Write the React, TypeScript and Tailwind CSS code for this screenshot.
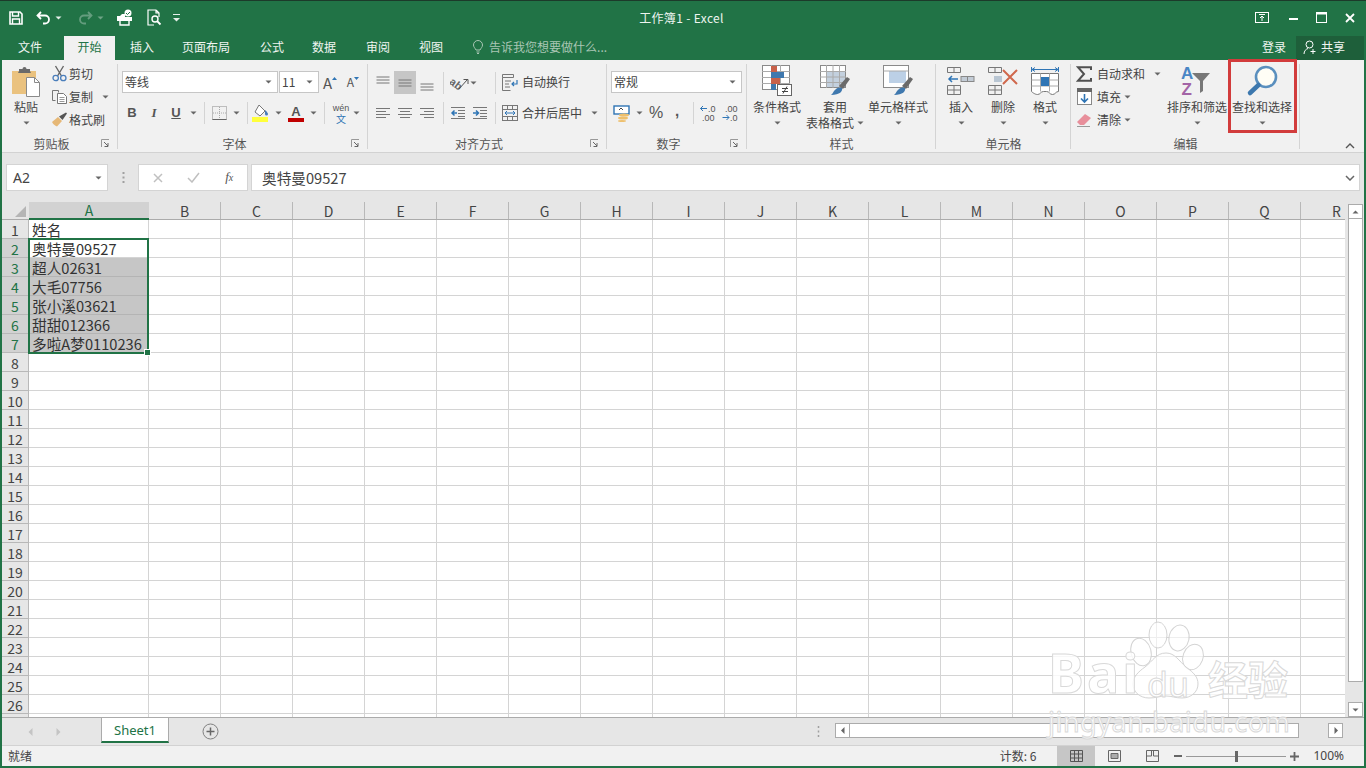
import React from "react";

const Caret = ({ c = "#666" }: { c?: string }) => (
  <svg width="7" height="4" viewBox="0 0 7 4" className="shrink-0"><path d="M0.5 0.5h6L3.5 3.5z" fill={c} /></svg>
);
const Sep = () => <span className="w-px h-[22px] bg-[#d4d4d4] shrink-0" />;
const Launcher = () => (
  <svg width="9" height="9" viewBox="0 0 9 9" className="shrink-0"><path d="M0.5 8V0.5H8" fill="none" stroke="#999" /><path d="M3 3l4 4M7 4v3.5H3.5" fill="none" stroke="#666" /></svg>
);

const Group = ({ w, label, launcher, children }: { w: string; label: string; launcher?: boolean; children: React.ReactNode }) => (
  <div className={`${w} shrink-0 flex flex-col relative`}>
    <div className="h-[75px] pt-[3px]">{children}</div>
    <div className="flex-1 flex items-start">
      <div className="flex-1 text-center text-[12px] leading-[17px] text-[#555]">{label}</div>
      {launcher && <div className="w-[16px] h-[17px] flex items-center mr-[1px]"><Launcher /></div>}
    </div>
    <span className="absolute right-0 top-[4px] bottom-[3px] w-px bg-[#d4d4d4]" />
  </div>
);

const Large = ({ w, icon, l1, l2, caretInline }: { w: string; icon: React.ReactNode; l1: string; l2?: string; caretInline?: boolean }) => (
  <div className={`${w} shrink-0 flex flex-col items-center text-[12px] leading-[16px] text-[#444]`}>
    <div className="h-[36px] flex items-center justify-center">{icon}</div>
    <div className="whitespace-nowrap">{l1}</div>
    {l2 ? (
      <div className="whitespace-nowrap flex items-center gap-[3px]">{l2}{caretInline && <Caret />}</div>
    ) : (
      <div className="h-[16px] flex items-center"><Caret /></div>
    )}
  </div>
);

const Small = ({ icon, text, iconW, tail }: { icon: React.ReactNode; text: string; iconW: string; tail?: React.ReactNode }) => (
  <div className="h-[23px] flex items-center text-[12px] leading-[16px] text-[#444] whitespace-nowrap">
    <span className={`${iconW} flex justify-center items-center shrink-0`}>{icon}</span>
    {text}
    {tail}
  </div>
);

const Box = ({ w, children, cls = "h-[22px]" }: { w: string; children?: React.ReactNode; cls?: string }) => (
  <span className={`${w} flex items-center justify-center shrink-0 ${cls}`}>{children}</span>
);

const Combo = ({ w, text }: { w: string; text: string }) => (
  <div className={`${w} h-[22px] bg-white border border-[#c6c6c6] flex items-center justify-between pl-[2px] pr-[5px] text-[12px] leading-[16px] text-[#444] shrink-0`}>
    <span>{text}</span><Caret />
  </div>
);

const AlignV = ({ y }: { y: number }) => (
  <svg width="16" height="22" viewBox="0 0 16 22"><path d={`M1.5 ${y}h13M1.5 ${y + 3}h13M1.5 ${y + 6}h13`} stroke="#777" fill="none" /></svg>
);
const AlignH = ({ k }: { k: number }) => {
  const s = k === 0 ? ["M1 .5h14", "M1 3.5h10", "M1 6.5h14", "M1 9.5h10"] : k === 1 ? ["M1 .5h14", "M3 3.5h10", "M1 6.5h14", "M3 9.5h10"] : ["M1 .5h14", "M5 3.5h10", "M1 6.5h14", "M5 9.5h10"];
  return <svg width="16" height="11" viewBox="0 0 16 11"><path d={s.join("")} stroke="#777" fill="none" /></svg>;
};
const Indent = ({ flip }: { flip?: boolean }) => (
  <svg width="16" height="12" viewBox="0 0 16 12">
    <path d="M1 .5h14M8 3.5h7M8 6.5h7M8 9.5h7M1 11.5h14" stroke="#777" fill="none" />
    <path d={flip ? "M1 6h5M4 3.5L6.5 6 4 8.5" : "M7 6H2M4.5 3.5L2 6l2.5 2.5"} stroke="#2f75b5" strokeWidth="1.5" fill="none" />
  </svg>
);

const PasteIcon = () => (
  <svg width="30" height="32" viewBox="0 0 30 32">
    <rect x="1" y="6" width="24" height="23" fill="#eac27f" />
    <path d="M8 6V4h3.5a2 2 0 014 0H19v2l1 2H7z" fill="#6a6a6a" />
    <path d="M15.5 12.5h8l5 5v14h-13z" fill="#fff" stroke="#8a8a8a" />
    <path d="M23.5 12.5v5h5" fill="none" stroke="#8a8a8a" />
  </svg>
);
const CutIcon = () => (
  <svg width="15" height="17" viewBox="0 0 15 17">
    <path d="M3.5 1l6 10M11.5 1l-6 10" stroke="#666" strokeWidth="1.4" fill="none" />
    <circle cx="3.7" cy="13" r="2.7" stroke="#4a7ebb" strokeWidth="1.3" fill="none" />
    <circle cx="11.3" cy="13" r="2.7" stroke="#4a7ebb" strokeWidth="1.3" fill="none" />
  </svg>
);
const CopyIcon = () => (
  <svg width="15" height="14" viewBox="0 0 15 14">
    <path d="M.5.5h6v2M.5.5v10h3" stroke="#777" fill="none" />
    <path d="M5.5 3.5h6l3 3v7h-9z" fill="#fff" stroke="#777" />
    <path d="M7.5 7.5h5M7.5 9.5h5M7.5 11.5h5" stroke="#999" />
  </svg>
);
const PainterIcon = () => (
  <svg width="17" height="15" viewBox="0 0 17 15">
    <path d="M1 10l6-5 4 4-5 5.5C4 14 2 12 1 10z" fill="#e6b877" />
    <path d="M8 4.5l3.5 3.5L16 1.5 15 .5z" fill="#555" />
  </svg>
);
const BorderIcon = () => (
  <svg width="15" height="14" viewBox="0 0 15 14">
    <rect x=".5" y=".5" width="14" height="13" fill="none" stroke="#888" strokeDasharray="1 1" />
    <path d="M7.5 1v12M1 7h13" stroke="#aaa" strokeDasharray="1 1" />
    <path d="M.5 13.5h14" stroke="#666" />
  </svg>
);
const FillIcon = () => (
  <svg width="18" height="18" viewBox="0 0 18 18">
    <path d="M7 1l6 6-5 5-5-4z" fill="#fff" stroke="#777" />
    <path d="M13 6c2 2 3 3 3 4a1.5 1.5 0 01-3 0z" fill="#4a7ebb" />
    <rect x="0" y="13" width="16" height="5" fill="#ffff3c" />
  </svg>
);
const WrapIcon = () => (
  <svg width="16" height="17" viewBox="0 0 16 17">
    <path d="M.5.5h11v3H.5zM.5 3.5v13h8M3 7h6M3 10h4M3 13h5" fill="none" stroke="#777" />
    <path d="M15 6v4h-5M12 8l-2 2 2 2" fill="none" stroke="#2f75b5" strokeWidth="1.2" />
  </svg>
);
const MergeIcon = () => (
  <svg width="16" height="16" viewBox="0 0 16 16">
    <rect x=".5" y=".5" width="15" height="15" fill="none" stroke="#777" />
    <path d="M.5 4.5h15M.5 11.5h15M5.5 .5v4M10.5 .5v4M5.5 11.5v4M10.5 11.5v4" stroke="#777" />
    <path d="M3 8h10M5 6L3 8l2 2M11 6l2 2-2 2" fill="none" stroke="#2f75b5" />
  </svg>
);
const OrientIcon = () => (
  <svg width="20" height="18" viewBox="0 0 20 18">
    <text x="0" y="13" fontSize="11" fontWeight="700" fill="#666" transform="rotate(38 5 9)" fontFamily="'Liberation Sans',sans-serif">ab</text>
    <path d="M9 15l8-9M13.5 5.5H18V10" fill="none" stroke="#555" />
  </svg>
);
const CurrencyIcon = () => (
  <svg width="18" height="17" viewBox="0 0 18 17">
    <rect x="1" y="1" width="15" height="8" fill="#fff" stroke="#2f75b5" strokeWidth="1.4" />
    <path d="M6 5l2-2 2 2" stroke="#444" fill="none" />
    <ellipse cx="11" cy="10" rx="5" ry="1.5" fill="#eec06e" /><ellipse cx="10" cy="13" rx="5" ry="1.5" fill="#eec06e" /><ellipse cx="9" cy="16" rx="4" ry="1" fill="#eec06e" />
  </svg>
);
const Decimals = ({ more }: { more?: boolean }) => (
  <svg width="20" height="18" viewBox="0 0 20 18" fontFamily="'Liberation Sans',sans-serif" fontSize="9" fill="#555">
    {more ? (
      <>
        <path d="M8 4.500H1.500M4 2L1.500 4.500 4 7" stroke="#2f75b5" fill="none" />
        <text x="9" y="8">.0</text><text x="3" y="17">.00</text>
      </>
    ) : (
      <>
        <text x="4" y="8">.00</text>
        <path d="M8 13.500H1.500M5.500 11L8 13.500 5.500 16" stroke="#2f75b5" fill="none" />
        <text x="9" y="17">.0</text>
      </>
    )}
  </svg>
);
const CondIcon = () => (
  <svg width="30" height="32" viewBox="0 0 30 32">
    <rect x=".5" y=".5" width="27" height="24" fill="#fff" stroke="#8a8a8a" />
    <path d="M9.5 0v25M18.5 0v25M0 6.5h28M0 12.5h28M0 18.5h28" stroke="#aaa" />
    <rect x="9" y="1" width="6" height="6" fill="#c8614a" /><rect x="9" y="7" width="13" height="6" fill="#3f78ae" />
    <rect x="9" y="13" width="9" height="6" fill="#c8614a" /><rect x="9" y="19" width="5" height="6" fill="#3f78ae" />
    <rect x="15.5" y="19.5" width="14" height="11" fill="#fff" stroke="#666" />
    <path d="M20 23.5h6M20 26.5h6M25 21.5l-4 7" stroke="#444" />
  </svg>
);
const Brush = () => (
  <>
    <path d="M19 21l8-9 3 2-7 10z" fill="#6a6a6a" />
    <path d="M14 26c3-4 6-4 8-3 1 3-2 7-11 7 1-1 2-2 3-4z" fill="#3f78ae" />
  </>
);
const TableStyle = () => (
  <svg width="30" height="32" viewBox="0 0 30 32">
    <rect x=".5" y=".5" width="25" height="22" fill="#fff" stroke="#8a8a8a" />
    <rect x="7" y="7" width="18" height="15" fill="#c3d0de" />
    <path d="M6.5 0v23M13 0v23M19.5 0v23M0 6.5h26M0 12h26M0 17.5h26" stroke="#aaa" />
    <Brush />
  </svg>
);
const CellStyle = () => (
  <svg width="30" height="32" viewBox="0 0 30 32">
    <rect x=".5" y=".5" width="25" height="22" fill="#fff" stroke="#8a8a8a" />
    <rect x="6" y="6" width="17" height="12" fill="#bcd0e6" />
    <path d="M.5 6h25" stroke="#aaa" />
    <Brush />
  </svg>
);
const InsertIcon = () => (
  <svg width="28" height="28" viewBox="0 0 28 28">
    <path d="M.5.5h13v5H.5zM7 .5v5M.5 18.5h13v9H.5zM.5 23h13M7 18.5v9" fill="none" stroke="#777" />
    <rect x="14" y="9.5" width="13" height="5" fill="#c3ccd6" stroke="#888" />
    <path d="M20.5 9.5v5" stroke="#888" />
    <path d="M11 12H2M5 9l-3 3 3 3" fill="none" stroke="#2f75b5" strokeWidth="1.5" />
  </svg>
);
const DeleteIcon = () => (
  <svg width="30" height="28" viewBox="0 0 30 28">
    <path d="M.5.5h13v5H.5zM7 .5v5M.5 18.5h13v9H.5zM.5 23h13M7 18.5v9M6.5 9.5h7v5h-7" fill="none" stroke="#777" />
    <rect x="6" y="9" width="8" height="6" fill="#b9c6d3" />
    <path d="M15 3l14 14M29 3L15 17" stroke="#d0684d" strokeWidth="2" />
  </svg>
);
const FormatIcon = () => (
  <svg width="28" height="30" viewBox="0 0 28 30">
    <path d="M.5 1v5M27.500 1v5M1 3.500h26M1 3.500l3-2M1 3.500l3 2M27 3.500l-3-2M27 3.500l-3 2" fill="none" stroke="#2f75b5" />
    <path d="M.5 7.500h27v18c-3 0-3 3-6 3s-3-3-6-3h-3c-3 0-3 3-6 3s-6-3-6-3z" fill="#fff" stroke="#777" />
    <path d="M9.500 7.500v18M18.500 7.500v18M.5 14h27M.5 20h27" stroke="#aaa" />
    <rect x="10" y="11" width="8" height="9" fill="#2f75b5" />
  </svg>
);
const SigmaIcon = () => (
  <svg width="16" height="16" viewBox="0 0 16 16"><path d="M15 4V1.200H2l6 6.800-6 6.800h13V12" fill="none" stroke="#505050" strokeWidth="2" /></svg>
);
const FillDown = () => (
  <svg width="15" height="17" viewBox="0 0 15 17">
    <rect x=".5" y=".5" width="14" height="16" fill="#fff" stroke="#888" /><rect x="0" y="0" width="15" height="4" fill="#666" />
    <path d="M7.5 6v8M4 10.5l3.5 3.5L11 10.5" fill="none" stroke="#2f75b5" strokeWidth="1.6" />
  </svg>
);
const Eraser = () => (
  <svg width="16" height="14" viewBox="0 0 16 14">
    <path d="M1 9l8-8 6 4-7 7H4z" fill="#e88f9b" />
    <path d="M1 13.5h13" stroke="#9a9a9a" />
  </svg>
);
const SortIcon = () => (
  <svg width="34" height="34" viewBox="0 0 34 34" fontFamily="'Liberation Sans',sans-serif" fontWeight="700" fontSize="17">
    <text x="1" y="15" fill="#4a86c5">A</text>
    <text x="1.5" y="31" fill="#a364a6">Z</text>
    <path d="M12 9h18l-7 8v10l-3 2V17z" fill="#777" />
  </svg>
);
const FindIcon = () => (
  <svg width="34" height="34" viewBox="0 0 34 34">
    <circle cx="21" cy="13" r="10" fill="#fffdf5" stroke="#5a8fbe" strokeWidth="2.6" />
    <path d="M13.5 21L5 29" stroke="#3d78ae" strokeWidth="4.5" strokeLinecap="round" />
  </svg>
);

const COLS = ["B", "C", "D", "E", "F", "G", "H", "I", "J", "K", "L", "M", "N", "O", "P", "Q", "R"];
const DATA: Record<number, string> = { 1: "姓名", 2: "奥特曼09527", 3: "超人02631", 4: "大毛07756", 5: "张小溪03621", 6: "甜甜012366", 7: "多啦A梦0110236" };
const ROWS = Array.from({ length: 27 }, (_, i) => i + 1);

export default function App() {
  return (
    <div className="w-[1366px] h-[768px] relative overflow-hidden bg-[#217346] px-[2px] pb-[2px] flex flex-col font-['Noto_Sans_CJK_SC','Noto_Sans',sans-serif]">
      {/* title */}
      <div className="h-[36px] -mx-[2px] shrink-0 border-t border-[#1c3a2a] flex items-center text-white relative">
        <div className="flex items-center pb-[2px]">
          <span className="w-[32px] flex justify-center">
            <svg width="14" height="14" viewBox="0 0 14 14"><path d="M1 1h10l2 2v10H1z" fill="none" stroke="#fff" strokeWidth="1.6" /><path d="M3.5 1v4h6V1M3.5 13V8h7v5" fill="none" stroke="#fff" strokeWidth="1.4" /></svg>
          </span>
          <span className="w-[22px] flex justify-center">
            <svg width="15" height="14" viewBox="0 0 15 14"><path d="M5 1L1.5 4.5 5 8M2 4.5h7a4 4 0 010 8H7" fill="none" stroke="#fff" strokeWidth="1.8" /></svg>
          </span>
          <span className="ml-[1px] w-[8px]"><Caret c="#e5efe9" /></span>
          <span className="ml-[12px] w-[20px] flex justify-center opacity-30">
            <svg width="15" height="14" viewBox="0 0 15 14"><path d="M10 1l3.5 3.5L10 8M13 4.5H6a4 4 0 000 8h2" fill="none" stroke="#fff" strokeWidth="1.8" /></svg>
          </span>
          <span className="ml-[2px] w-[8px] opacity-40"><Caret c="#e5efe9" /></span>
          <span className="ml-[8px] w-[24px] flex justify-center">
            <svg width="18" height="17" viewBox="0 0 18 17"><path d="M1 7h3l2-2h3v3h7v4H1z" fill="#fff" /><path d="M4 12v4h9v-4" fill="none" stroke="#fff" strokeWidth="1.4" /><circle cx="12" cy="4" r="3.5" fill="#fff" /><path d="M10 4l1.5 1.5L14 3" stroke="#217346" fill="none" /></svg>
          </span>
          <span className="ml-[4px] w-[26px] flex justify-center">
            <svg width="16" height="17" viewBox="0 0 16 17"><path d="M10 1H2v15h6M10 1l3 3v4M10 1v3h3" fill="none" stroke="#fff" strokeWidth="1.2" /><circle cx="9" cy="10" r="3" fill="none" stroke="#fff" strokeWidth="1.4" /><path d="M11 12l3.5 3.5" stroke="#fff" strokeWidth="1.8" /></svg>
          </span>
          <span className="ml-[6px]">
            <svg width="7" height="8" viewBox="0 0 7 8"><path d="M0 .5h7" stroke="#e5efe9" /><path d="M0 4h7L3.5 7.5z" fill="#e5efe9" /></svg>
          </span>
        </div>
        <div className="flex-1 text-center text-[12px] tracking-[0.35px] leading-[16px] text-[#eef5f0] pr-[65px] pb-[1px]">工作簿1 - Excel</div>
        <div className="flex items-center pb-[2px] pr-[1px]">
          <span className="w-[26px] ml-[1px] flex justify-center"><svg width="14" height="11" viewBox="0 0 14 11"><rect x=".5" y=".5" width="13" height="10" fill="none" stroke="#fff" /><path d="M4 2.5h6M7 9V4M5 6l2-2 2 2" fill="none" stroke="#fff" /></svg></span>
          <span className="ml-[4px] w-[28px] flex justify-center"><span className="w-[9px] h-[2px] bg-white mt-[2px]" /></span>
          <span className="w-[28px] flex justify-center"><svg width="11" height="11" viewBox="0 0 11 11"><rect x=".5" y=".5" width="10" height="10" fill="none" stroke="#fff" /><path d="M0 1.5h11" stroke="#fff" strokeWidth="2" /></svg></span>
          <span className="w-[30px] flex justify-center"><svg width="10" height="10" viewBox="0 0 10 10"><path d="M1 1l8 8M9 1L1 9" stroke="#fff" strokeWidth="1.8" /></svg></span>
        </div>
      </div>

      {/* tabs */}
      <div className="h-[24px] shrink-0 flex items-stretch text-[12px] leading-[16px] text-[#f0f5f1] whitespace-nowrap">
        <span className="ml-[16px] self-center mb-[2px]">文件</span>
        <span className="ml-[22px] w-[51px] bg-[#f1f1f1] text-[#217346] flex items-center justify-center pb-[2px]">开始</span>
        <span className="ml-[15px] self-center mb-[2px]">插入</span>
        <span className="ml-[28px] self-center mb-[2px]">页面布局</span>
        <span className="ml-[30px] self-center mb-[2px]">公式</span>
        <span className="ml-[28px] self-center mb-[2px]">数据</span>
        <span className="ml-[30px] self-center mb-[2px]">审阅</span>
        <span className="ml-[29px] self-center mb-[2px]">视图</span>
        <span className="ml-[29px] self-center mb-[2px] flex">
          <svg width="12" height="14" viewBox="0 0 12 14"><path d="M4 10C3 8 1.500 7 1.500 5a4.500 4.500 0 019 0C10.500 7 9 8 8 10zM4.500 12h3M5 13.500h2" fill="none" stroke="#a9c6b4" /></svg>
        </span>
        <span className="ml-[5px] self-center mb-[2px] text-[#a9c6b4]">告诉我您想要做什么...</span>
        <span className="ml-auto self-center mb-[2px]">登录</span>
        <span className="ml-[10px] w-[68px] bg-[#1e5f3a] flex items-center pl-[7px] gap-[3px] pb-[2px]">
          <svg width="15" height="15" viewBox="0 0 15 15"><circle cx="6.500" cy="4.500" r="3.500" fill="none" stroke="#fff" /><path d="M1 14c0-3 2-5 4-5.500M10 9v5M7.500 11.500h5" fill="none" stroke="#fff" /></svg>
          共享
        </span>
      </div>

      {/* ribbon */}
      <div className="h-[93px] shrink-0 bg-[#f1f1f1] border-b border-[#d2d2d2] flex">
        <Group w="w-[116px]" label="剪贴板" launcher>
          <div className="flex">
            <Large w="w-[48px]" icon={<PasteIcon />} l1="粘贴" />
            <div className="-mt-px">
              <Small iconW="w-[19px]" icon={<CutIcon />} text="剪切" />
              <Small iconW="w-[19px]" icon={<CopyIcon />} text="复制" tail={<span className="ml-[9px]"><Caret /></span>} />
              <Small iconW="w-[19px]" icon={<PainterIcon />} text="格式刷" />
            </div>
          </div>
        </Group>

        <Group w="w-[250px]" label="字体" launcher>
          <div className="flex pt-[8px] pl-[4px] items-center">
            <Combo w="w-[156px]" text="等线" />
            <div className="ml-[1px]"><Combo w="w-[40px]" text="11" /></div>
            <Box w="w-[22px]"><span className="text-[15px] leading-none text-[#555]">A</span><svg width="5" height="3" viewBox="0 0 5 3" className="-mt-[8px]"><path d="M0 3h5L2.500 0z" fill="#2f75b5" /></svg></Box>
            <Box w="w-[24px]"><span className="text-[12px] leading-none text-[#555]">A</span><svg width="5" height="3" viewBox="0 0 5 3" className="-mt-[8px]"><path d="M0 0h5L2.500 3z" fill="#2f75b5" /></svg></Box>
          </div>
          <div className="flex mt-[9px] items-center text-[#555] font-['Liberation_Sans',sans-serif] text-[13px] leading-[16px]">
            <span className="w-[3px]" />
            <Box w="w-[22px]"><b>B</b></Box>
            <Box w="w-[22px]"><i className="font-['Liberation_Serif',serif] font-bold">I</i></Box>
            <Box w="w-[22px]"><b className="underline">U</b></Box>
            <Box w="w-[12px]"><Caret /></Box>
            <span className="w-[5px]" /><Sep /><span className="w-[2px]" />
            <Box w="w-[24px]"><BorderIcon /></Box>
            <Box w="w-[10px]"><Caret /></Box>
            <span className="w-[6px]" /><Sep /><span className="w-[1px]" />
            <Box w="w-[24px]"><FillIcon /></Box>
            <Box w="w-[11px]"><Caret /></Box>
            <Box w="w-[24px]"><span className="flex flex-col items-center leading-none"><span className="text-[13px] leading-[13px] font-bold">A</span><span className="w-[16px] h-[4px] bg-[#c00000]" /></span></Box>
            <Box w="w-[10px]"><Caret /></Box>
            <span className="w-[6px]" /><Sep /><span className="w-[4px]" />
            <Box w="w-[24px]"><span className="flex flex-col items-center leading-none"><span className="text-[9px] leading-[10px]">wén</span><span className="text-[10px] leading-[11px] text-[#2f75b5] font-['Noto_Sans_CJK_SC',sans-serif]">文</span></span></Box>
            <Box w="w-[7px]"><Caret /></Box>
          </div>
        </Group>

        <Group w="w-[239px]" label="对齐方式" launcher>
          <div className="flex pt-[8px] items-center h-[31px]">
            <span className="w-[4px]" />
            <Box w="w-[22px]" cls="h-[23px]"><AlignV y={5} /></Box>
            <Box w="w-[22px]" cls="h-[23px] bg-[#c6c6c6]"><AlignV y={8} /></Box>
            <Box w="w-[22px]" cls="h-[23px]"><AlignV y={12} /></Box>
            <span className="w-[5px]" /><Sep /><span className="w-[6px]" />
            <Box w="w-[20px]"><OrientIcon /></Box>
            <Box w="w-[6px]"><Caret /></Box>
            <span className="w-[19px]" /><Sep /><span className="w-[6px]" />
            <Box w="w-[16px]" cls="h-[20px]"><WrapIcon /></Box>
            <span className="ml-[4px] text-[12px] leading-[16px] text-[#444] mb-[1px]">自动换行</span>
          </div>
          <div className="flex mt-[8px] items-center">
            <span className="w-[4px]" />
            <Box w="w-[22px]"><AlignH k={0} /></Box>
            <Box w="w-[22px]"><AlignH k={1} /></Box>
            <Box w="w-[22px]"><AlignH k={2} /></Box>
            <span className="w-[5px]" /><Sep /><span className="w-[3px]" />
            <Box w="w-[22px]"><Indent /></Box>
            <Box w="w-[22px]"><Indent flip /></Box>
            <span className="w-[4px]" /><Sep /><span className="w-[6px]" />
            <Box w="w-[16px]"><MergeIcon /></Box>
            <span className="ml-[4px] text-[12px] leading-[16px] text-[#444]">合并后居中</span>
            <span className="ml-[9px]"><Caret /></span>
          </div>
        </Group>

        <Group w="w-[140px]" label="数字" launcher>
          <div className="flex pt-[8px] pl-[4px]"><Combo w="w-[131px]" text="常规" /></div>
          <div className="flex mt-[9px] pl-[4px] items-center text-[#555]">
            <Box w="w-[22px]"><CurrencyIcon /></Box>
            <Box w="w-[12px]"><Caret /></Box>
            <Box w="w-[22px]"><span className="text-[16px] leading-[18px] font-['Liberation_Sans',sans-serif]">%</span></Box>
            <Box w="w-[20px]"><span className="text-[15px] font-bold leading-none -mt-[6px] font-['Liberation_Sans',sans-serif]">,</span></Box>
            <span className="w-[6px]" /><Sep /><span className="w-[4px]" />
            <Box w="w-[22px]"><Decimals more /></Box>
            <Box w="w-[22px]"><Decimals /></Box>
          </div>
        </Group>

        <Group w="w-[189px]" label="样式">
          <div className="flex">
            <span className="w-[4px]" />
            <Large w="w-[52px]" icon={<CondIcon />} l1="条件格式" />
            <Large w="w-[64px]" icon={<TableStyle />} l1="套用" l2="表格格式" caretInline />
            <Large w="w-[62px]" icon={<CellStyle />} l1="单元格样式" />
          </div>
        </Group>

        <Group w="w-[135px]" label="单元格">
          <div className="flex">
            <span className="w-[4px]" />
            <Large w="w-[42px]" icon={<InsertIcon />} l1="插入" />
            <Large w="w-[42px]" icon={<DeleteIcon />} l1="删除" />
            <Large w="w-[42px]" icon={<FormatIcon />} l1="格式" />
          </div>
        </Group>

        <Group w="w-[229px]" label="编辑">
          <div className="flex">
            <div className="w-[95px] shrink-0 -mt-px">
              <Small iconW="w-[26px]" icon={<SigmaIcon />} text="自动求和" tail={<span className="ml-[9px]"><Caret /></span>} />
              <Small iconW="w-[26px]" icon={<FillDown />} text="填充" tail={<span className="ml-[3px]"><Caret /></span>} />
              <Small iconW="w-[26px]" icon={<Eraser />} text="清除" tail={<span className="ml-[3px]"><Caret /></span>} />
            </div>
            <Large w="w-[62px]" icon={<SortIcon />} l1="排序和筛选" />
            <span className="w-[4px]" />
            <Large w="w-[60px]" icon={<FindIcon />} l1="查找和选择" />
          </div>
        </Group>

        <div className="flex-1 flex items-end justify-end pb-[3px] pr-[9px]">
          <svg width="10" height="6" viewBox="0 0 10 6"><path d="M1 5l4-4 4 4" fill="none" stroke="#555" strokeWidth="1.4" /></svg>
        </div>
      </div>

      {/* formula bar */}
      <div className="h-[49px] shrink-0 bg-[#e6e6e6] flex items-start pt-[11px] text-[#444]">
        <div className="ml-[4px] w-[102px] h-[27px] bg-white border border-[#d4d4d4] flex items-center justify-between pl-[6px] pr-[5px] text-[14px] leading-[18px] font-['Noto_Sans',sans-serif]">
          A2<Caret />
        </div>
        <div className="w-[30px] h-[27px] flex items-center justify-center">
          <svg width="3" height="11" viewBox="0 0 3 11"><path d="M1.500 0v2M1.500 4.500v2M1.500 9v2" stroke="#a0a0a0" strokeWidth="2" /></svg>
        </div>
        <div className="w-[110px] h-[27px] bg-white border border-[#d4d4d4] flex items-center">
          <span className="w-[36px] ml-[1px] flex justify-center"><svg width="10" height="10" viewBox="0 0 10 10"><path d="M1 1l8 8M9 1L1 9" stroke="#c0c0c0" strokeWidth="1.500" /></svg></span>
          <span className="w-[36px] flex justify-center"><svg width="13" height="11" viewBox="0 0 13 11"><path d="M1 6l4 4 7-9" fill="none" stroke="#c0c0c0" strokeWidth="1.500" /></svg></span>
          <span className="w-[36px] text-center text-[13px] leading-[16px] italic font-['Liberation_Serif',serif] text-[#555]">f<span className="text-[10px]">x</span></span>
        </div>
        <div className="ml-[3px] mr-[4px] flex-1 h-[27px] bg-white border border-[#d4d4d4] flex items-center justify-between pl-[10px] pr-[4px] text-[14.67px] leading-[20px]">
          奥特曼09527
          <svg width="10" height="6" viewBox="0 0 10 6"><path d="M1 1l4 4 4-4" fill="none" stroke="#666" strokeWidth="1.500" /></svg>
        </div>
      </div>

      {/* sheet */}
      <div className="h-[515px] shrink-0 flex bg-[#e6e6e6]">
        <div className="w-[1343px] shrink-0 overflow-hidden bg-white">
          <div className="h-[18px] flex bg-[#e6e6e6] border-b border-[#ababab] text-[14px] leading-[16px] text-[#444]">
            <div className="w-[27px] shrink-0 flex items-end justify-end pb-[2px] pr-[3px]">
              <svg width="11" height="11" viewBox="0 0 11 11"><path d="M11 0v11H0z" fill="#b5b5b5" /></svg>
            </div>
            <div className="w-[120px] shrink-0 h-[18px] bg-[#d2d2d2] border-b-2 border-[#217346] text-[#217346] flex items-center justify-center">A</div>
            {COLS.map((c) => (
              <div key={c} className="w-[72px] h-[17px] shrink-0 border-r border-[#b8b8b8] flex items-center justify-center">{c}</div>
            ))}
          </div>
          {ROWS.map((r) => {
            const sel = r >= 2 && r <= 7;
            const grey = r >= 3 && r <= 7;
            return (
              <div key={r} className="h-[19px] flex">
                <div className={`w-[27px] shrink-0 border-r border-b border-[#b8b8b8] flex items-center justify-center text-[14px] leading-[16px] pt-[2px] ${sel ? "bg-[#d2d2d2] text-[#217346]" : "bg-[#e6e6e6] text-[#444]"}`}>{r < 27 ? r : ""}</div>
                <div className={`w-[120px] shrink-0 border-r border-b flex items-center pl-[3px] pt-[2px] text-[14.67px] leading-[16px] whitespace-nowrap text-[#333] ${grey ? "bg-[#c6c6c6] border-[#b4b4b4]" : "bg-white border-[#d4d4d4]"}`}>{DATA[r]}</div>
                {COLS.map((c) => (
                  <div key={c} className="w-[72px] shrink-0 border-r border-b border-[#d4d4d4]" />
                ))}
              </div>
            );
          })}
        </div>
        <div className="flex-1 flex flex-col pl-[3px] pr-[1px] pt-[2px]">
          <div className="h-[15px] bg-white border border-[#ababab] flex items-center justify-center">
            <svg width="7" height="4" viewBox="0 0 7 4"><path d="M.5 3.500h6L3.500.5z" fill="#666" /></svg>
          </div>
          <div className="h-[463px] bg-white border-x border-b border-[#ababab]" />
          <div className="flex-1" />
          <div className="h-[15px] bg-white border border-[#ababab] flex items-center justify-center">
            <Caret />
          </div>
        </div>
      </div>

      {/* tab bar */}
      <div className="h-[28px] shrink-0 bg-[#e6e6e6] border-t border-[#ababab] flex items-start">
        <div className="w-[99px] h-[27px] flex items-center">
          <svg width="5" height="8" viewBox="0 0 5 8" className="ml-[26px]"><path d="M4.500 0v8L.5 4z" fill="#c4c4c4" /></svg>
          <svg width="5" height="8" viewBox="0 0 5 8" className="ml-[23px]"><path d="M.5 0v8l4-4z" fill="#c4c4c4" /></svg>
        </div>
        <div className="w-[68px] h-[25px] bg-white border-b-2 border-[#217346] border-x border-x-[#ababab] text-[13px] leading-[18px] text-[#217346] flex items-center justify-center font-['Noto_Sans',sans-serif]">Sheet1</div>
        <div className="ml-[33px] h-[27px] flex items-center">
          <svg width="17" height="17" viewBox="0 0 17 17"><circle cx="8.500" cy="8.500" r="7.500" fill="none" stroke="#808080" /><path d="M8.500 4.500v8M4.500 8.500h8" stroke="#666" strokeWidth="1.500" /></svg>
        </div>
        <div className="ml-[598px] h-[27px] flex items-center">
          <svg width="3" height="11" viewBox="0 0 3 11"><path d="M1.500 0v2M1.500 4.500v2M1.500 9v2" stroke="#a0a0a0" strokeWidth="1.500" /></svg>
        </div>
        <div className="ml-[15px] mt-[5px] flex items-stretch h-[15px]">
          <div className="w-[15px] bg-white border border-[#ababab] flex items-center justify-center"><svg width="4" height="7" viewBox="0 0 4 7"><path d="M3.500 0v7L0 3.500z" fill="#666" /></svg></div>
          <div className="w-[449px] bg-white border-y border-r border-[#ababab]" />
          <div className="w-[29px]" />
          <div className="w-[15px] bg-white border border-[#ababab] flex items-center justify-center"><svg width="4" height="7" viewBox="0 0 4 7"><path d="M.5 0v7L4 3.500z" fill="#666" /></svg></div>
        </div>
      </div>

      {/* status */}
      <div className="h-[21px] shrink-0 bg-[#f1f1f1] border-t border-[#d2d2d2] flex items-stretch text-[12px] leading-[16px] text-[#444]">
        <span className="ml-[6px] self-center">就绪</span>
        <span className="ml-auto self-center">计数: 6</span>
        <span className="ml-[21px] w-[38px] bg-[#c6c6c6] flex items-center justify-center">
          <svg width="13" height="12" viewBox="0 0 13 12"><path d="M.5.5h12v11H.5zM4.500.5v11M8.500.5v11M.5 4h12M.5 8h12" fill="none" stroke="#555" /></svg>
        </span>
        <span className="w-[38px] flex items-center justify-center">
          <svg width="13" height="12" viewBox="0 0 13 12"><path d="M.5.5h12v11H.5zM3 3.500h7v5H3zM3 5h7M3 7h7" fill="none" stroke="#666" /></svg>
        </span>
        <span className="w-[38px] flex items-center justify-center">
          <svg width="13" height="12" viewBox="0 0 13 12"><path d="M.5.5h12v11H.5zM.5 6h5V.5M12.500 6h-5V.5" fill="none" stroke="#666" /></svg>
        </span>
        <span className="ml-[3px] w-[8px] self-center h-[2px] bg-[#666]" />
        <span className="ml-[4px] w-[100px] self-center h-px bg-[#999] relative flex justify-center">
          <span className="absolute -top-[5px] w-[3px] h-[11px] bg-[#666]" />
        </span>
        <span className="ml-[4px] self-center flex">
          <svg width="9" height="9" viewBox="0 0 9 9"><path d="M4.500 0v9M0 4.500h9" stroke="#666" strokeWidth="1.800" /></svg>
        </span>
        <span className="ml-[14px] mr-[20px] self-center font-['Noto_Sans',sans-serif]">100%</span>
      </div>

      {/* selection */}
      <div className="absolute left-[28px] top-[238px] w-[121px] h-[116px] border-2 border-[#217346] pointer-events-none">
        <span className="absolute -right-[3px] -bottom-[3px] w-[5px] h-[5px] bg-[#217346] outline outline-1 outline-white" />
      </div>

      {/* annotation */}
      <div className="absolute left-[1228px] top-[59px] w-[69px] h-[74px] border-[3px] border-[#d23c3c] pointer-events-none" />

      {/* watermark */}
      <div className="absolute left-[1046px] top-[620px] w-[250px] h-[122px] pointer-events-none text-[#ffffffcc] font-bold [-webkit-text-stroke:1px_#d9d9d9]">
        <svg className="absolute left-0 top-0" width="250" height="80" viewBox="0 0 250 80" fill="#ffffff99" stroke="#d4d4d4">
          <ellipse cx="95" cy="32" rx="10" ry="14" transform="rotate(-15 95 32)" />
          <ellipse cx="112" cy="15" rx="9" ry="13" />
          <ellipse cx="133" cy="18" rx="10" ry="13" transform="rotate(12 133 18)" />
          <ellipse cx="147" cy="37" rx="10" ry="13" transform="rotate(20 147 37)" />
          <path d="M120 33c9 0 13 8 20 14 8 6 12 10 12 17 0 8-7 14-16 14-7 0-10-2-16-2s-10 2-17 2c-9 0-16-6-16-14 0-7 5-12 12-17 8-6 11-14 21-14z" />
        </svg>
        <span className="absolute left-[2px] top-[20px] text-[54px] leading-[64px] tracking-[3px] font-['Noto_Sans',sans-serif]">Bai</span>
        <span className="absolute left-[101px] top-[44px] text-[34px] leading-[40px] font-normal font-['Noto_Sans',sans-serif]">du</span>
        <span className="absolute left-[162px] top-[34px] text-[40px] leading-[48px]">经验</span>
        <span className="absolute left-[2px] top-[84px] text-[27px] leading-[36px] tracking-[0.5px] font-normal whitespace-nowrap font-['Noto_Sans',sans-serif]">jingyan.baidu.com</span>
      </div>
    </div>
  );
}
